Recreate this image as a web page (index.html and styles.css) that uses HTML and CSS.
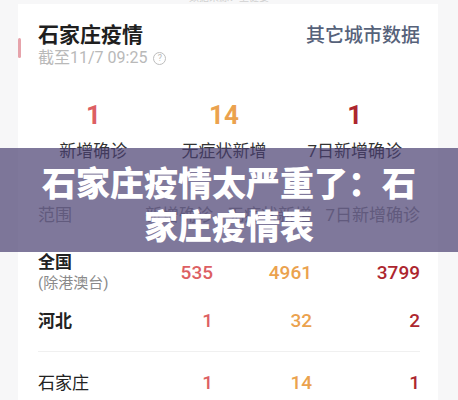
FILE: index.html
```html
<!DOCTYPE html>
<html lang="zh-CN">

<head>
    <meta charset="UTF-8">
    <meta name="viewport" content="width=device-width, initial-scale=1.0">
    <title>石家庄疫情</title>
    <link rel="stylesheet" href="styles.css">
</head>

<body>
    <div class="page">
        <div class="source">数据来源：卫健委</div>

        <div class="card">
            <!-- 头部 -->
            <div class="head">
                <div class="head-left">
                    <i class="bar"></i>
                    <div>
                        <h2>石家庄疫情</h2>
                        <p class="time">截至11/7 09:25 <span class="help">?</span></p>
                    </div>
                </div>
                <a class="more">其它城市数据</a>
            </div>

            <!-- 汇总 -->
            <div class="stats">
                <div class="stat">
                    <b class="red">1</b>
                    <span>新增确诊</span>
                </div>
                <div class="stat">
                    <b class="orange">14</b>
                    <span>无症状新增</span>
                </div>
                <div class="stat">
                    <b class="dark">1</b>
                    <span>7日新增确诊</span>
                </div>
            </div>

            <!-- 表格 -->
            <div class="table">
                <div class="row thead">
                    <span>范围</span>
                    <span>新增确诊</span>
                    <span>无症状新增</span>
                    <span>7日新增确诊</span>
                </div>
                <div class="row">
                    <div class="name">
                        <strong>全国</strong>
                        <small>(除港澳台)</small>
                    </div>
                    <em class="red">535</em>
                    <em class="orange">4961</em>
                    <em class="dark">3799</em>
                </div>
                <div class="row">
                    <div class="name"><strong>河北</strong></div>
                    <em class="red">1</em>
                    <em class="orange">32</em>
                    <em class="dark">2</em>
                </div>
                <div class="row sep">
                    <div class="name">石家庄</div>
                    <em class="red">1</em>
                    <em class="orange">14</em>
                    <em class="dark">1</em>
                </div>
            </div>
        </div>

        <!-- 标题遮罩 -->
        <div class="banner">石家庄疫情太严重了：石家庄疫情表</div>
    </div>
</body>

</html>
```

FILE: styles.css
```css
* {
    margin: 0;
    padding: 0;
    box-sizing: border-box;
}

body {
    background-color: #f7f7f8;
    font-family: Roboto, "Noto Sans CJK SC", sans-serif;
    color: #222;
}

.page {
    position: relative;
    height: 400px;
    overflow: hidden;
}

.source {
    margin-top: -8px;
    height: 12px;
    text-align: center;
    font-size: 10px;
    line-height: 12px;
    color: #d2d2d2;
}

.card {
    margin: 0 20px 0 18px;
    background-color: #fff;
    padding: 18px 18px 0 0;
}

.head {
    display: flex;
    justify-content: space-between;
    align-items: flex-start;
}

.head-left {
    display: flex;
    align-items: flex-start;
}

.bar {
    width: 3px;
    height: 20px;
    margin: 16px 17px 0 0;
    background-color: #e6a3ab;
    border-radius: 2px;
}

.head h2 {
    font-size: 21px;
    line-height: 26px;
    font-weight: 700;
    color: #1f1f1f;
}

.time {
    font-size: 16px;
    line-height: 20px;
    color: #b9b9b9;
    display: flex;
    align-items: center;
    gap: 6px;
}

.help {
    width: 13px;
    height: 13px;
    border: 1px solid #bdbdbd;
    border-radius: 50%;
    font-size: 9px;
    line-height: 11px;
    text-align: center;
}

.more {
    font-size: 19px;
    line-height: 27px;
    font-weight: 500;
    color: #56627a;
}

.stats {
    display: flex;
    margin: 31px 0 0 10px;
}

.stat {
    flex: 1;
    display: flex;
    flex-direction: column;
    align-items: center;
}

.stat b {
    font-size: 26px;
    line-height: 32px;
    font-weight: 700;
}

.stat span {
    margin-top: 8px;
    font-size: 17px;
    line-height: 24px;
    color: #333;
}

.red {
    color: #dd5f63;
}

.orange {
    color: #eba24e;
}

.dark {
    color: #ad262f;
}

.table {
    margin: 32px 0 0 20px;
}

.row {
    display: grid;
    grid-template-columns: 95px 80px 99px 108px;
    align-items: center;
    padding: 8px 0;
}

.row > * {
    justify-self: end;
    white-space: nowrap;
}

.row > :first-child {
    justify-self: start;
}

.thead {
    padding-bottom: 16px;
    font-size: 17px;
    line-height: 24px;
    color: #9a9a9a;
}

.name {
    font-size: 17px;
    line-height: 22px;
}

.name strong {
    display: block;
    font-weight: 700;
}

.name small {
    display: block;
    font-size: 15px;
    line-height: 20px;
    color: #8a8a8a;
}

.row em {
    font-style: normal;
    font-size: 19px;
    font-weight: 500;
}

.row.sep {
    margin-top: 11px;
    padding-top: 19px;
    border-top: 1px solid #f0f0f0;
}

.banner {
    position: absolute;
    top: 148px;
    left: 0;
    right: 0;
    height: 104px;
    padding: 12px 40px 0;
    background-color: rgba(72, 62, 112, 0.7);
    color: #fff;
    font-family: "Noto Sans CJK SC", sans-serif;
    font-size: 34px;
    line-height: 43px;
    font-weight: 900;
    text-align: center;
}
```
